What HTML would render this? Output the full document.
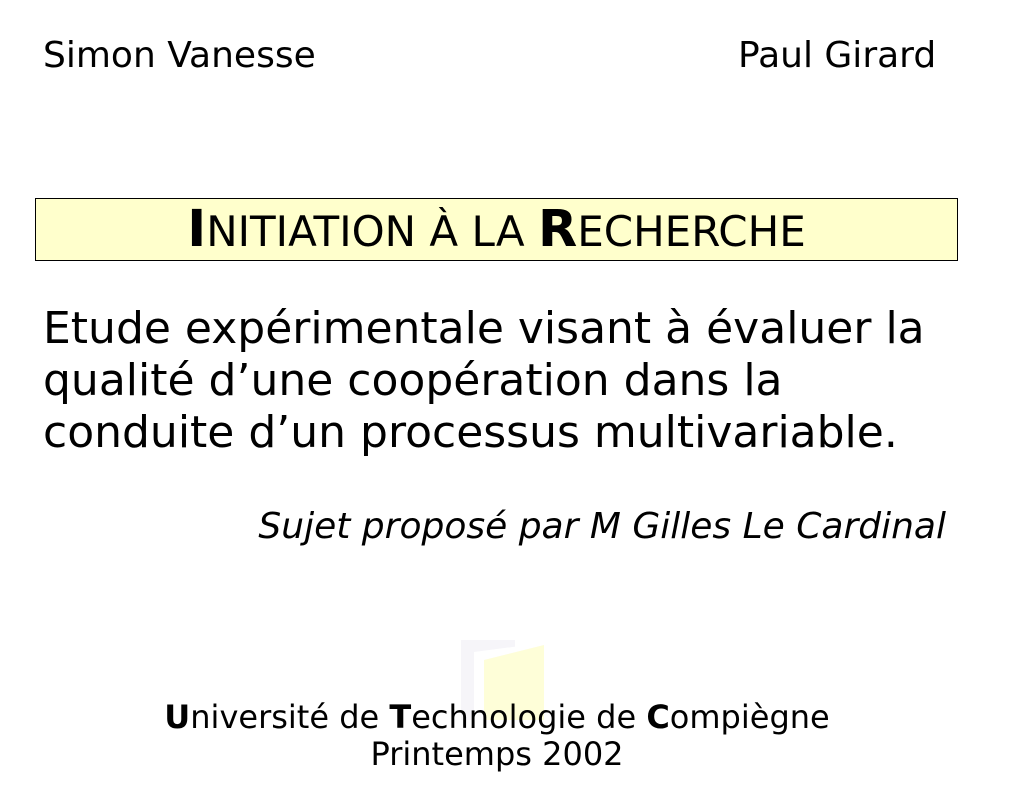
<!DOCTYPE html>
<html><head><meta charset="utf-8"><style>
body{margin:0;width:1011px;height:793px;background:#fff;position:relative;overflow:hidden;font-family:"DejaVu Sans","Liberation Sans",sans-serif;color:#000}
div{position:absolute;white-space:nowrap;line-height:1}
</style></head><body>
<svg style="position:absolute;left:0;top:0" width="1011" height="793">
<polygon points="461,640 515,640 515,720 461,720" fill="#f6f5f9"/>
<polygon points="474,652 543,643 543,720 474,720" fill="#fff"/>
<polygon points="484,660 544,645 544,720 484,720" fill="#fefed8"/>
</svg>
<div style="left:43px;top:38px;font-size:36px">Simon Vanesse</div>
<div style="left:738px;top:38px;font-size:36px">Paul Girard</div>
<div style="left:35px;top:198px;width:921px;height:61px;border:1px solid #000;background:#ffffcc"></div>
<div style="left:36px;width:921px;top:204px;font-size:42px;text-align:center"><b style="font-size:51px">I</b>NITIATION À LA <b style="font-size:51px">R</b>ECHERCHE</div>
<div style="left:43px;top:303px;font-size:44px;line-height:52px">Etude expérimentale visant à évaluer la<br>qualité d’une coopération dans la<br>conduite d’un processus multivariable.</div>
<div style="right:65px;top:509px;font-size:36px;font-style:italic">Sujet proposé par M Gilles Le Cardinal</div>
<div style="left:0;width:994px;top:699px;font-size:32px;text-align:center;line-height:37px"><b>U</b>niversité de <b>T</b>echnologie de <b>C</b>ompiègne<br>Printemps 2002</div>
</body></html>
